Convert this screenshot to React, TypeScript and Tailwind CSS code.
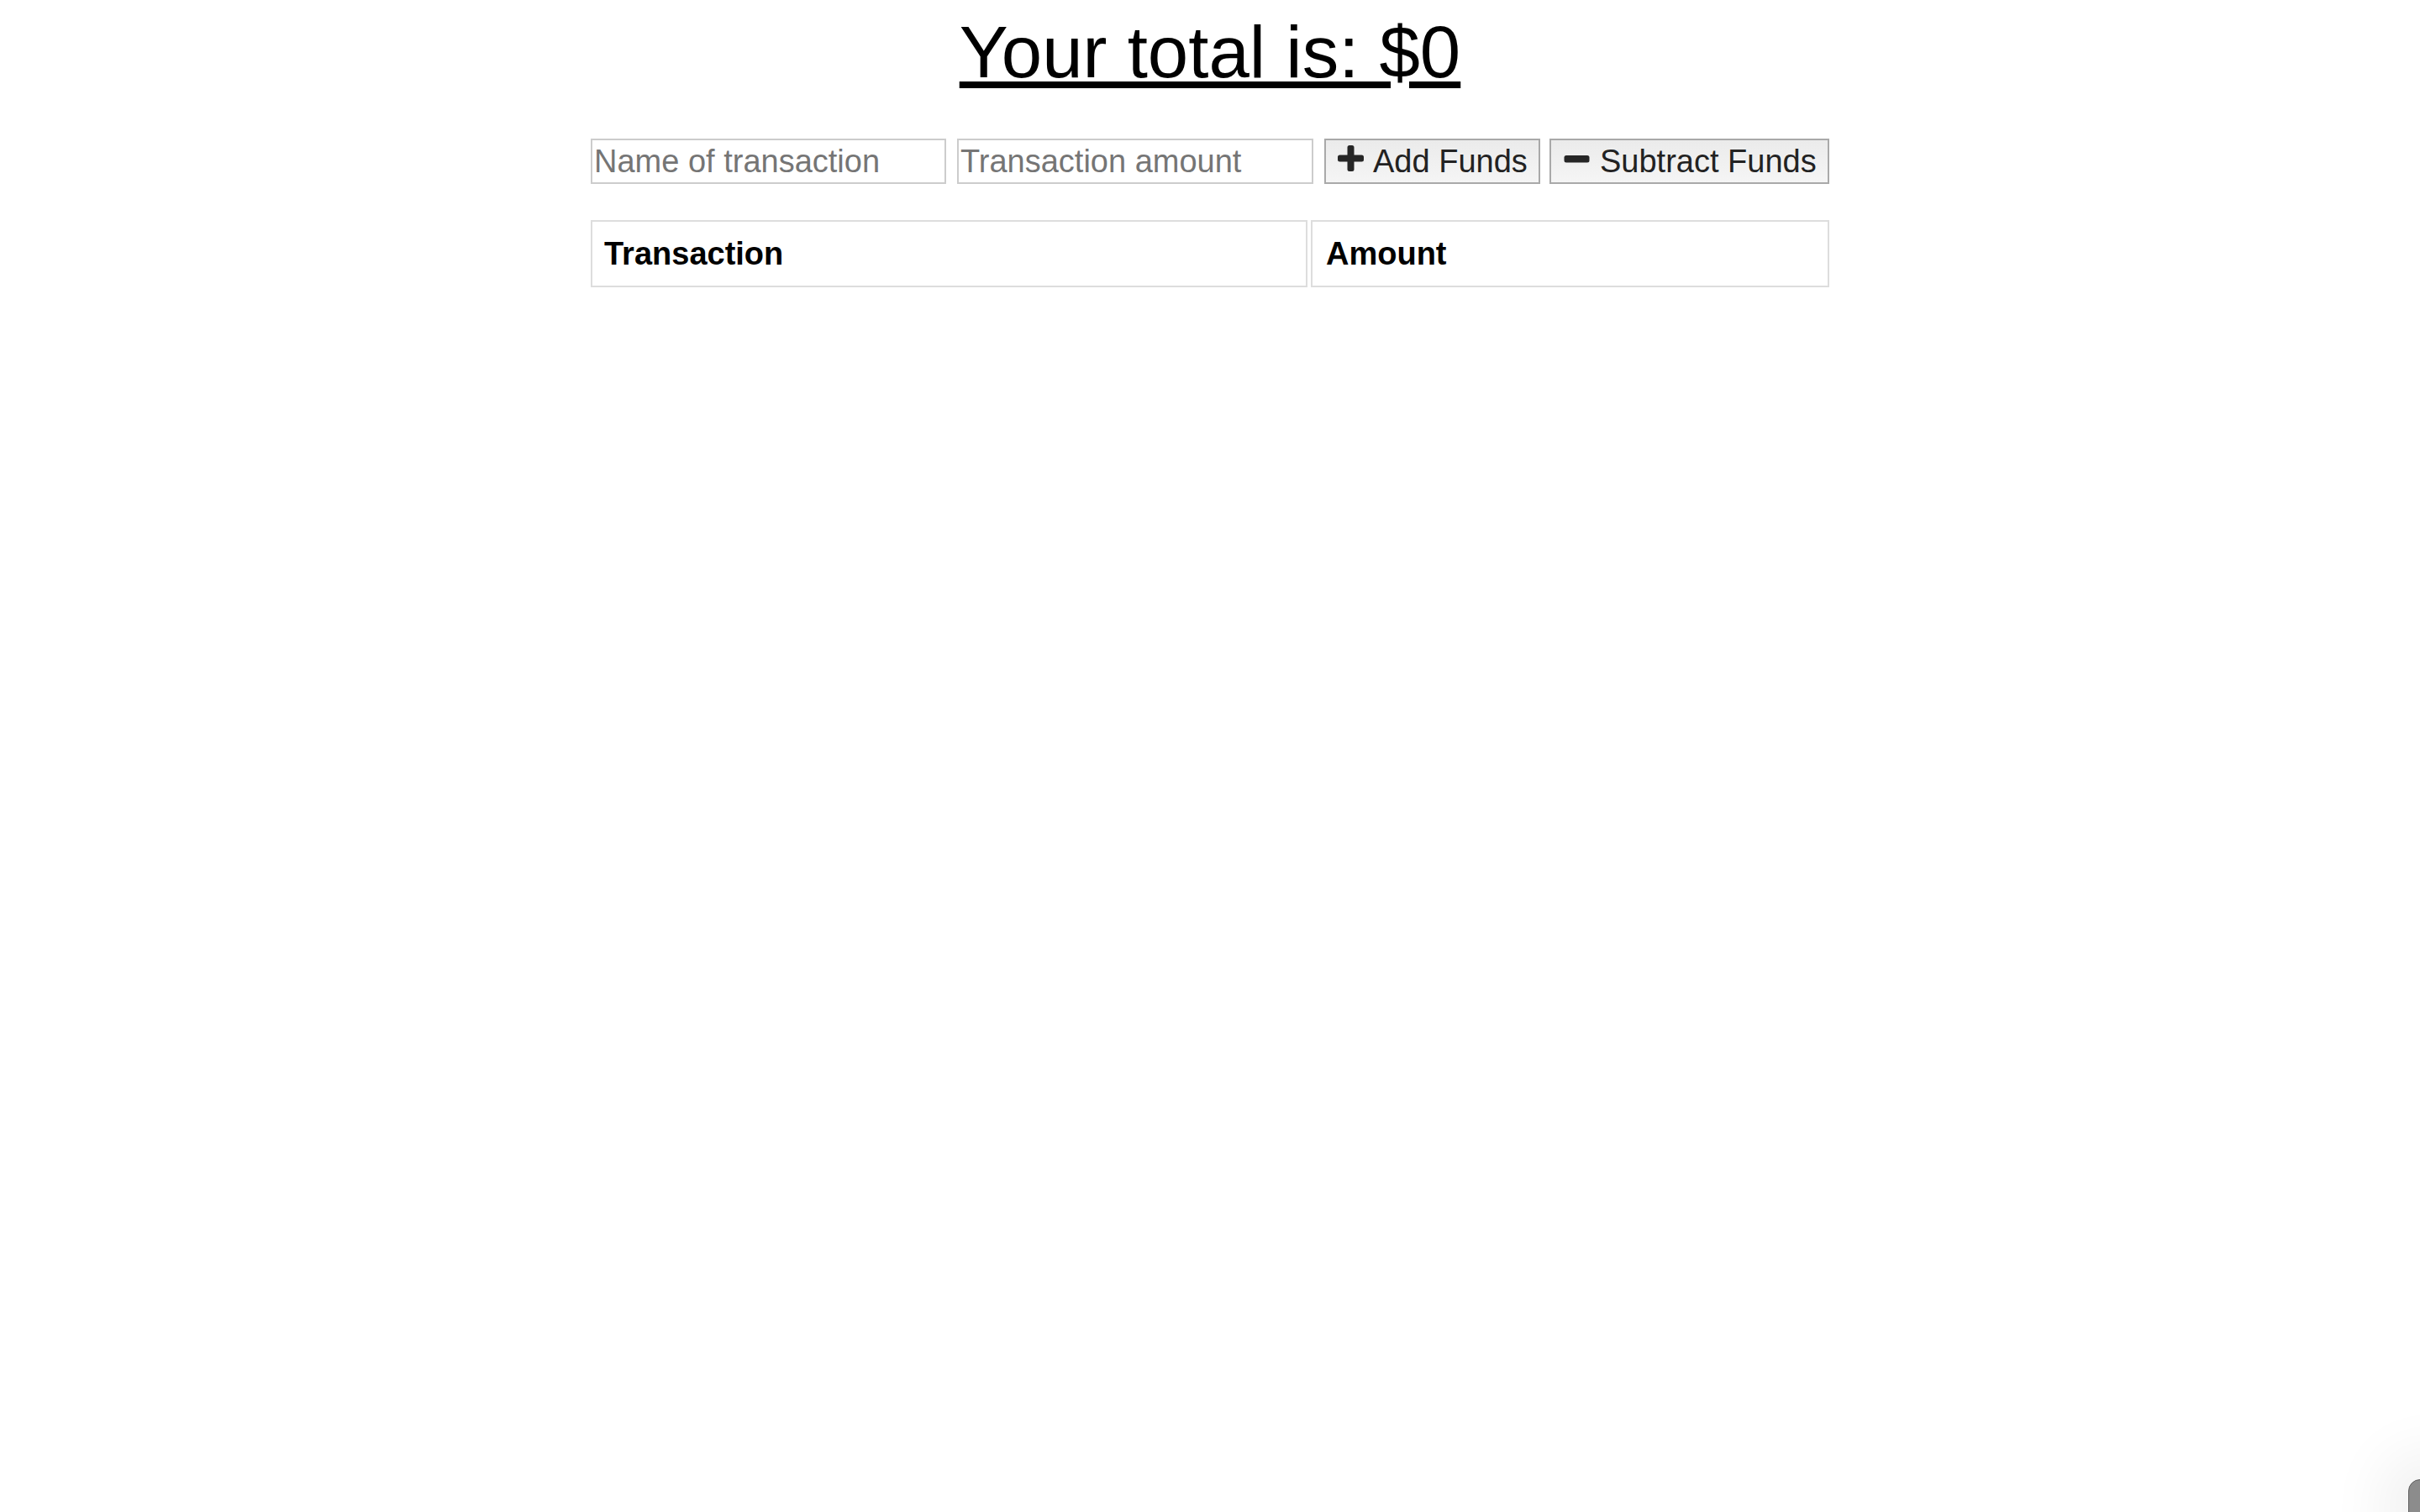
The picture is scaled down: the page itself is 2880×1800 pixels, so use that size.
import React from "react";

function PlusIcon() {
  return (
    <svg width="31" height="31" viewBox="0 0 31 31" className="block">
      <path
        d="M11.5 2.5A2.5 2.5 0 0 1 14 0h3a2.5 2.5 0 0 1 2.5 2.5v9h9A2.5 2.5 0 0 1 31 14v3a2.5 2.5 0 0 1-2.5 2.5h-9v9A2.5 2.5 0 0 1 17 31h-3a2.5 2.5 0 0 1-2.5-2.5v-9h-9A2.5 2.5 0 0 1 0 17v-3a2.5 2.5 0 0 1 2.5-2.5h9z"
        fill="#262626"
      />
    </svg>
  );
}

function MinusIcon() {
  return (
    <svg width="31" height="30" viewBox="0 0 31 30" className="block">
      <rect x="0.5" y="11" width="30" height="8.5" rx="2.5" fill="#262626" />
    </svg>
  );
}

export default function App() {
  return (
    <div
      className="relative min-h-screen w-full bg-white text-black"
      style={{ fontFamily: '"Liberation Sans", Arial, Helvetica, sans-serif' }}
    >
      <div className="flex flex-col items-center pt-[12px]">
        <h1 className="text-[87px] leading-[100px] font-normal underline decoration-auto">
          Your total is: $0
        </h1>

        <div className="mt-[53px] flex w-[1474px] items-center">
          <input
            type="text"
            placeholder="Name of transaction"
            className="h-[54px] w-[423px] border-2 border-[#cccccc] bg-white px-[2px] text-[38px] text-black outline-none placeholder:text-[#757575]"
          />
          <input
            type="text"
            placeholder="Transaction amount"
            className="ml-[13px] h-[54px] w-[424px] border-2 border-[#cccccc] bg-white px-[2px] text-[38px] text-black outline-none placeholder:text-[#757575]"
          />
          <button className="ml-[13px] flex h-[54px] w-[257px] items-center border-2 border-[#a9a9a9] bg-gradient-to-b from-[#ebebeb] to-[#f5f5f5] pl-[14px] text-[38px] leading-none text-[#222222]">
            <span className="-mt-[7px]">
              <PlusIcon />
            </span>
            <span className="ml-[11px]">Add Funds</span>
          </button>
          <button className="ml-[11px] flex h-[54px] w-[333px] items-center border-2 border-[#a9a9a9] bg-gradient-to-b from-[#ebebeb] to-[#f5f5f5] pl-[15px] text-[38px] leading-none text-[#222222]">
            <span className="-mt-[6px]">
              <MinusIcon />
            </span>
            <span className="ml-[12px]">Subtract Funds</span>
          </button>
        </div>

        <div className="mt-[43px] flex w-[1474px] gap-[4px]">
          <div className="flex h-[80px] w-[853px] items-center border-2 border-[#dddddd] px-[14px] text-[38px] font-bold">
            Transaction
          </div>
          <div className="flex h-[80px] flex-1 items-center border-2 border-[#dddddd] px-[16px] text-[38px] font-bold">
            Amount
          </div>
        </div>
      </div>

      <div className="fixed left-[2866px] top-[1761px] h-[60px] w-[40px] rounded-tl-[14px] border border-[#5e5e5e] bg-[#8c8c8c] shadow-[0_0_70px_30px_rgba(0,0,0,0.06)]" />
    </div>
  );
}
